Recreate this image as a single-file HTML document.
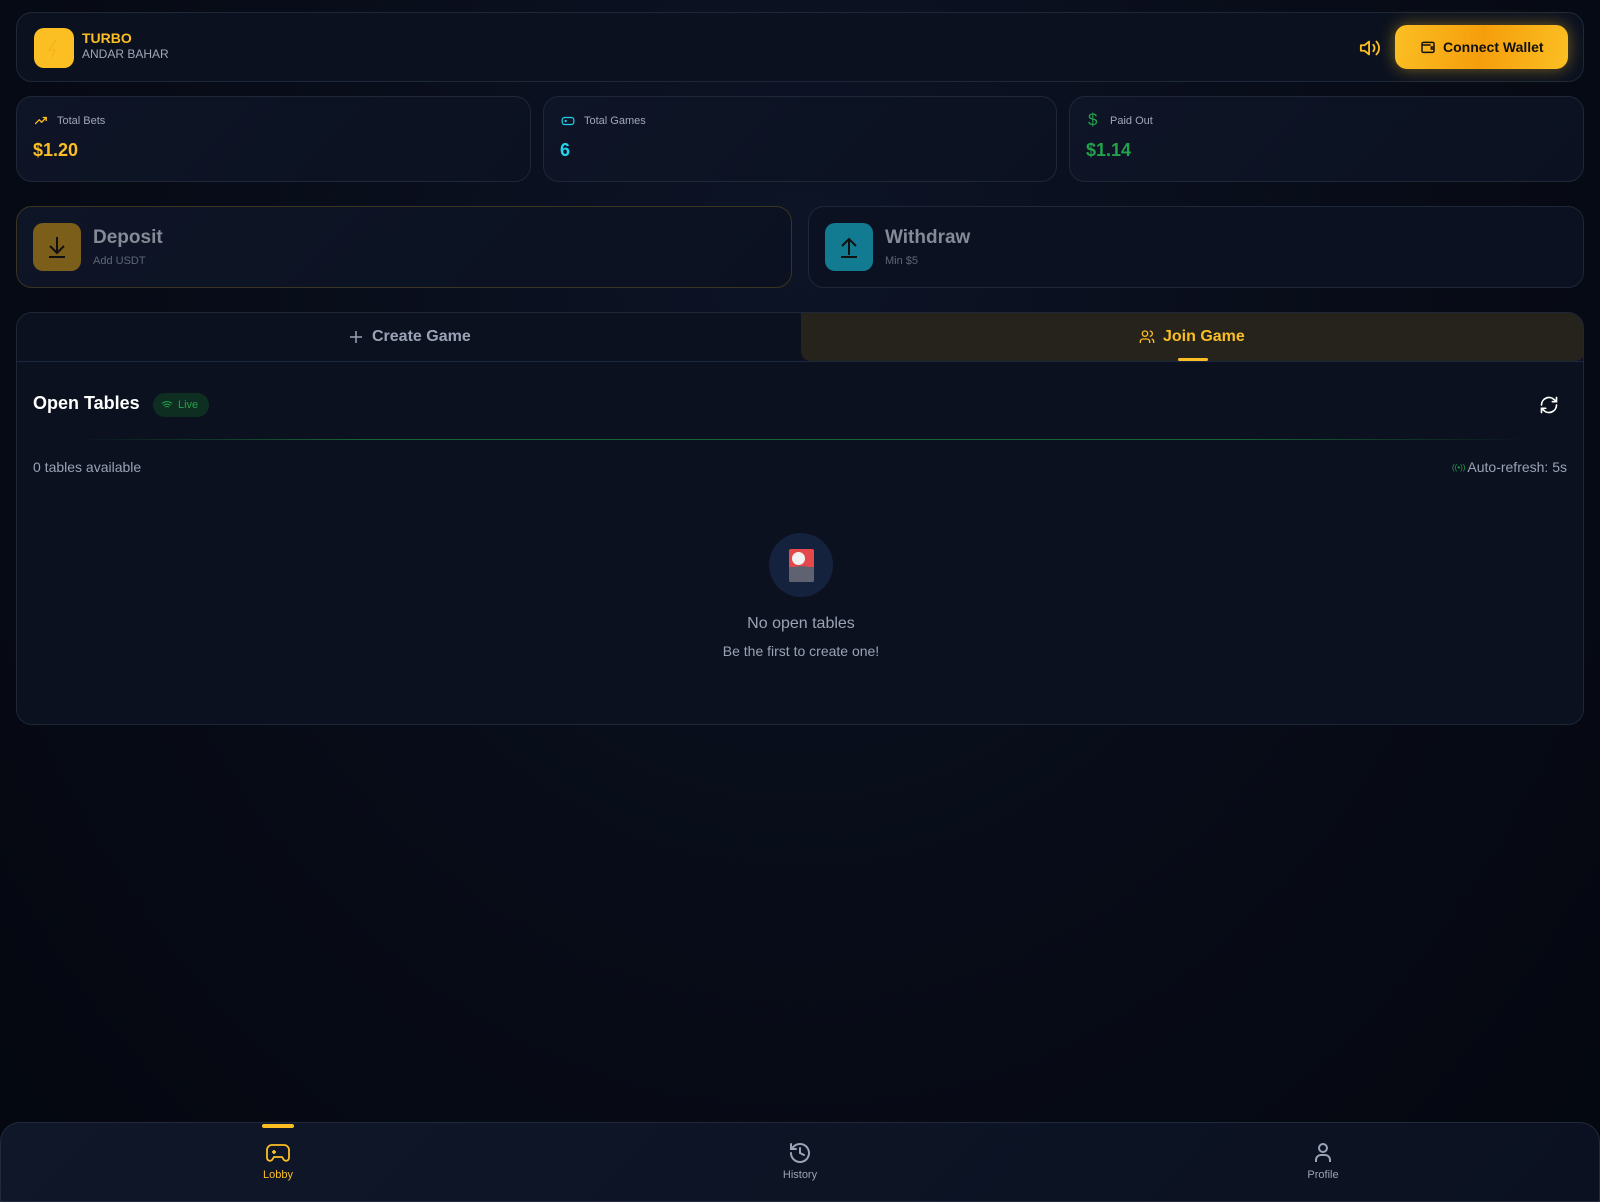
<!DOCTYPE html>
<html><head><meta charset="utf-8"><style>
*{box-sizing:border-box;margin:0;padding:0}
body{width:1600px;height:1200px;overflow:hidden;background:radial-gradient(ellipse at 50% 20%,#0d1426 0%,#080c18 50%,#04070f 100%);font-family:"Liberation Sans",sans-serif;color:#fff;position:relative}
.card{position:absolute;border:1px solid #1e2838;border-radius:16px;background:linear-gradient(135deg,#0e1526,#0b1120)}
.abs{position:absolute}
svg{display:block}
</style></head><body>
<!-- header -->
<div class="card" style="left:16px;top:12px;width:1568px;height:70px;border-radius:16px;background:#0b111f">
  <div class="abs" style="left:17px;top:15px;width:40px;height:40px;border-radius:10px;background:#fbbf24"><svg width="40" height="40" viewBox="0 0 40 40"><path d="M22 12l-7 10h6l-3 7" stroke="#f59e0b" stroke-width="1" fill="none" opacity=".6"/></svg></div>
  <div class="abs" style="left:65px;top:17px;font-size:14px;font-weight:bold;color:#fbbf24">TURBO</div>
  <div class="abs" style="left:65px;top:34px;font-size:12px;color:#a0a8b8">ANDAR BAHAR</div>
  <svg class="abs" style="left:1342px;top:24px" width="22" height="22" viewBox="0 0 24 24" fill="none" stroke="#fbbf24" stroke-width="2" stroke-linecap="round" stroke-linejoin="round"><path d="M11 5L6 9H2v6h4l5 4z"/><path d="M15.5 8.5a5 5 0 0 1 0 7"/><path d="M19 5a10 10 0 0 1 0 14"/></svg>
  <div class="abs" style="left:1378px;top:12px;width:173px;height:44px;border-radius:12px;background:linear-gradient(100deg,#fbbf24,#f59e0b 50%,#fbbf24);box-shadow:0 0 16px rgba(251,191,36,.45);color:#111;font-weight:bold;font-size:14px;line-height:44px;padding-left:48px">Connect Wallet
    <svg class="abs" style="left:25px;top:14px" width="16" height="16" viewBox="0 0 24 24" fill="none" stroke="#111" stroke-width="2.2"><rect x="3" y="5" width="18" height="15" rx="2"/><path d="M3 9h13M21 12h-4v3h4"/></svg>
  </div>
</div>
<!-- stats -->
<div class="card" style="left:16px;top:96px;width:515px;height:86px">
  <svg class="abs" style="left:16px;top:17px" width="16" height="14" viewBox="0 0 24 24" fill="none" stroke="#fbbf24" stroke-width="2.2"><path d="M2 17l7-7 4 4 8-8M15 6h6v6"/></svg>
  <div class="abs" style="left:40px;top:18px;font-size:11px;color:#a0a8b8">Total Bets</div>
  <div class="abs" style="left:16px;top:43px;font-size:18px;font-weight:bold;color:#fbbf24">$1.20</div>
</div>
<div class="card" style="left:543px;top:96px;width:514px;height:86px">
  <svg class="abs" style="left:16px;top:17px" width="16" height="14" viewBox="0 0 24 24" fill="none" stroke="#22d3ee" stroke-width="2"><rect x="2" y="6" width="20" height="12" rx="4"/><path d="M6 12h4M8 10v4M15 11h.01M18 13h.01"/></svg>
  <div class="abs" style="left:40px;top:18px;font-size:11px;color:#a0a8b8">Total Games</div>
  <div class="abs" style="left:16px;top:43px;font-size:18px;font-weight:bold;color:#22d3ee">6</div>
</div>
<div class="card" style="left:1069px;top:96px;width:515px;height:86px">
  <div class="abs" style="left:18px;top:13px;font-size:17px;color:#22a24a">$</div>
  <div class="abs" style="left:40px;top:18px;font-size:11px;color:#a0a8b8">Paid Out</div>
  <div class="abs" style="left:16px;top:43px;font-size:18px;font-weight:bold;color:#22a24a">$1.14</div>
</div>
<!-- deposit/withdraw -->
<div class="card" style="left:16px;top:206px;width:776px;height:82px;border-color:#3a3420">
  <div class="abs" style="left:16px;top:16px;width:48px;height:48px;border-radius:10px;background:#7a5e1a"><svg width="48" height="48" viewBox="0 0 48 48" fill="none" stroke="#111" stroke-width="2"><path d="M24 14v16M17 23l7 7 7-7M16 34h16"/></svg></div>
  <div class="abs" style="left:76px;top:20px;font-size:19px;font-weight:bold;color:#858a96">Deposit</div>
  <div class="abs" style="left:76px;top:48px;font-size:11px;color:#5f6676">Add USDT</div>
</div>
<div class="card" style="left:808px;top:206px;width:776px;height:82px;background:#0b1120">
  <div class="abs" style="left:16px;top:16px;width:48px;height:48px;border-radius:10px;background:#137b91"><svg width="48" height="48" viewBox="0 0 48 48" fill="none" stroke="#111" stroke-width="2"><path d="M24 32V16M17 23l7-7 7 7M16 34h16"/></svg></div>
  <div class="abs" style="left:76px;top:20px;font-size:19px;font-weight:bold;color:#858a96">Withdraw</div>
  <div class="abs" style="left:76px;top:48px;font-size:11px;color:#5f6676">Min $5</div>
</div>
<!-- main panel -->
<div class="card" style="left:16px;top:312px;width:1568px;height:413px;background:#0b111e;overflow:hidden">
  <div class="abs" style="left:0;top:48px;width:1568px;height:1px;background:#1c2840"></div>
  <div class="abs" style="left:784px;top:0;width:784px;height:48px;background:#26231d;border-radius:0 16px 10px 10px"></div>
  <svg class="abs" style="left:332px;top:17px" width="14" height="14" viewBox="0 0 14 14" stroke="#9aa3b5" stroke-width="1.5"><path d="M7 1v12M1 7h12"/></svg>
  <div class="abs" style="left:355px;top:15px;font-size:16px;font-weight:bold;color:#9aa3b5">Create Game</div>
  <svg class="abs" style="left:1122px;top:16px" width="16" height="16" viewBox="0 0 24 24" fill="none" stroke="#fbbf24" stroke-width="2"><circle cx="9" cy="7" r="4"/><path d="M2 21v-2a4 4 0 0 1 4-4h6a4 4 0 0 1 4 4v2M16 3a4 4 0 0 1 0 8M22 21v-2a4 4 0 0 0-3-3.9"/></svg>
  <div class="abs" style="left:1146px;top:15px;font-size:16px;font-weight:bold;color:#fbbf24">Join Game</div>
  <div class="abs" style="left:1161px;top:45px;width:30px;height:3px;background:#fbbf24;border-radius:2px"></div>
  <div class="abs" style="left:16px;top:80px;font-size:18px;font-weight:bold;color:#fff">Open Tables</div>
  <div class="abs" style="left:136px;top:80px;width:56px;height:24px;border-radius:12px;background:#0f2e22;color:#22a24a;font-size:11px;line-height:24px;padding-left:25px">Live
    <svg class="abs" style="left:8px;top:6px" width="12" height="12" viewBox="0 0 24 24" fill="none" stroke="#22a24a" stroke-width="2"><path d="M2 9a15 15 0 0 1 20 0M5 13a10 10 0 0 1 14 0M8.5 16.5a5 5 0 0 1 7 0M12 20h.01"/></svg></div>
  <svg class="abs" style="left:1522px;top:82px" width="20" height="20" viewBox="0 0 24 24" fill="none" stroke="#fff" stroke-width="2" stroke-linecap="round"><path d="M3 12a9 9 0 0 1 15.5-6.2L21 8M21 3v5h-5M21 12a9 9 0 0 1-15.5 6.2L3 16M3 21v-5h5"/></svg>
  <div class="abs" style="left:56px;top:126px;width:1456px;height:1px;background:linear-gradient(90deg,transparent,#166534 20%,#166534 80%,transparent)"></div>
  <div class="abs" style="left:16px;top:146px;font-size:14px;color:#9aa3b5">0 tables available</div>
  <div class="abs" style="right:16px;top:146px;font-size:14px;color:#9aa3b5">Auto-refresh: 5s</div>
  <div class="abs" style="left:1435px;top:150px;font-size:8px;color:#22a24a">((•))</div>
  <div class="abs" style="left:752px;top:220px;width:64px;height:64px;border-radius:50%;background:#15223d"></div>
  <div class="abs" style="left:772px;top:236px;width:25px;height:33px;border-radius:2px;background:linear-gradient(#e4484a 55%,#5f6270 55%);overflow:hidden"><div class="abs" style="left:3px;top:3px;width:13px;height:13px;border-radius:50%;background:#f2f2f2"></div><div class="abs" style="left:-4px;top:17px;width:33px;height:20px;border-radius:50%;background:#5f6270"></div></div>
  <div class="abs" style="left:0;width:1568px;top:302px;text-align:center;font-size:16px;color:#9aa3b5">No open tables</div>
  <div class="abs" style="left:0;width:1568px;top:330px;text-align:center;font-size:14px;color:#9aa3b5">Be the first to create one!</div>
</div>
<!-- bottom nav -->
<div class="abs" style="left:0;top:1122px;width:1600px;height:80px;border:1px solid #202a3c;border-radius:20px 20px 0 0;background:linear-gradient(135deg,#0f1729,#0b1120)">
  <div class="abs" style="left:261px;top:1px;width:32px;height:4px;background:#fbbf24;border-radius:2px"></div>
  <svg class="abs" style="left:264px;top:19px" width="26" height="22" viewBox="0 0 24 22" fill="none" stroke="#fbbf24" stroke-width="1.8" stroke-linejoin="round"><path d="M6 3h12a5 5 0 0 1 5 5v8a3 3 0 0 1-5 2l-2-3H8l-2 3a3 3 0 0 1-5-2V8a5 5 0 0 1 5-5z"/><path d="M6 10h4M8 8v4M15 9h.01M18 11h.01"/></svg>
  <div class="abs" style="left:237px;width:80px;text-align:center;top:46px;font-size:11px;color:#fbbf24">Lobby</div>
  <svg class="abs" style="left:787px;top:18px" width="24" height="24" viewBox="0 0 24 24" fill="none" stroke="#9aa3b5" stroke-width="2" stroke-linecap="round"><path d="M3 12a9 9 0 1 0 3-6.7L3 8M3 3v5h5M12 7v5l4 2"/></svg>
  <div class="abs" style="left:759px;width:80px;text-align:center;top:46px;font-size:11px;color:#9aa3b5">History</div>
  <svg class="abs" style="left:1310px;top:18px" width="24" height="24" viewBox="0 0 24 24" fill="none" stroke="#9aa3b5" stroke-width="2"><circle cx="12" cy="7" r="4"/><path d="M5 21v-2a5 5 0 0 1 5-5h4a5 5 0 0 1 5 5v2"/></svg>
  <div class="abs" style="left:1282px;width:80px;text-align:center;top:46px;font-size:11px;color:#9aa3b5">Profile</div>
</div>
</body></html>
